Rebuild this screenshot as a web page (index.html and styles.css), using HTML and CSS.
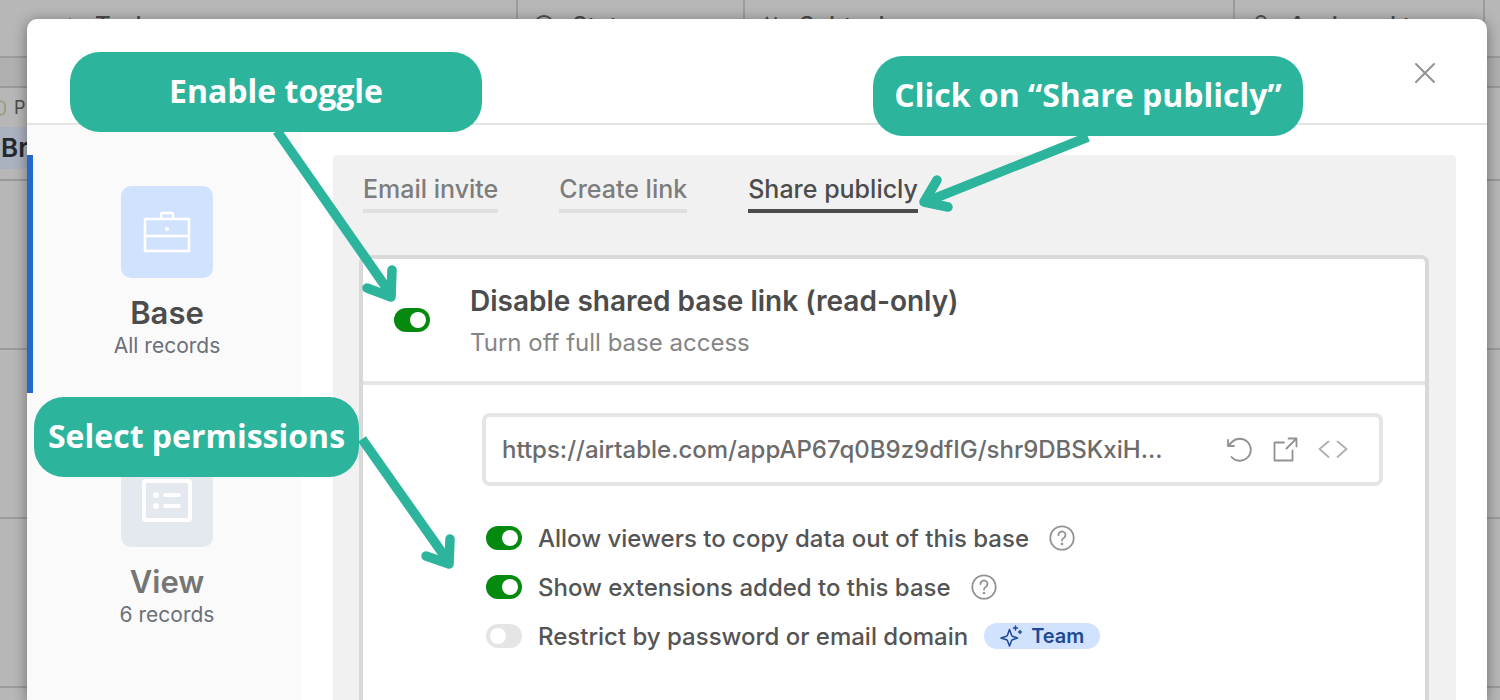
FILE: index.html
```html
<!DOCTYPE html>
<html lang="en">
  <head>
    <meta charset="UTF-8" />
    <meta name="viewport" content="width=device-width, initial-scale=1.0" />
    <title>Share base</title>
    <link rel="stylesheet" href="styles.css" />
  </head>
  <body>
    <!-- Dimmed grid behind the dialog -->
    <div class="grid" aria-hidden="true">
      <div class="grid-head">
        <div class="grid-cell grid-cell-first">
          <svg width="14" height="20" viewBox="0 0 14 20" fill="none" stroke="currentColor" stroke-width="2">
            <path d="M1 18L7 5l6 13M3 13h8" />
          </svg>
          Tasks
        </div>
        <div class="grid-cell">
          <svg width="20" height="20" viewBox="0 0 20 20" fill="none" stroke="currentColor" stroke-width="2">
            <circle cx="10" cy="10" r="9" />
            <path d="M6 9l4 4 4-4" />
          </svg>
          Status
        </div>
        <div class="grid-cell">
          <svg width="20" height="20" viewBox="0 0 20 20" fill="none" stroke="currentColor" stroke-width="2">
            <path d="M2 8l4-5 3 5M11 17l4-15" />
          </svg>
          Subtasks
        </div>
        <div class="grid-cell">
          <svg width="20" height="20" viewBox="0 0 20 20" fill="none" stroke="currentColor" stroke-width="2">
            <circle cx="10" cy="6" r="5" />
            <path d="M2 19c1-5 15-5 16 0" />
          </svg>
          Assigned to
        </div>
        <div class="grid-cell"></div>
      </div>
      <div class="grid-spacer"></div>
      <div class="grid-group">
        <div class="grid-group-label"><span class="grid-pill"></span>P</div>
        <div class="grid-group-name">Br</div>
      </div>
      <div class="grid-row"></div>
      <div class="grid-row"></div>
      <div class="grid-row"></div>
      <div class="grid-row"></div>
    </div>

    <div class="dialog" role="dialog" aria-label="Share">
      <header class="dialog-head">
        <button class="close" type="button" aria-label="Close">
          <svg width="22" height="22" viewBox="0 0 22 22" fill="none" stroke="#929292" stroke-width="2" stroke-linecap="round">
            <path d="M2 2l18 18M20 2L2 20" />
          </svg>
        </button>
      </header>

      <div class="dialog-body">
        <nav class="sidebar">
          <button class="scope scope-active" type="button">
            <span class="scope-tile">
              <svg width="48" height="44" viewBox="0 0 48 44" fill="none" stroke="#fff" stroke-width="2.5">
                <rect x="2" y="9" width="44" height="32" />
                <path d="M2 26h44M18 9V5q0-2 2-2h8q2 0 2 2v4" />
                <circle cx="24" cy="19" r="2" fill="#fff" stroke="none" />
              </svg>
            </span>
            <span class="scope-name">Base</span>
            <span class="scope-count">All records</span>
          </button>
          <button class="scope" type="button">
            <span class="scope-tile">
              <svg width="50" height="44" viewBox="0 0 50 44" fill="none" stroke="#fff" stroke-width="4" stroke-linecap="round">
                <rect x="2" y="2" width="46" height="39" rx="2" />
                <path d="M23 16h14M23 27h14" />
                <circle cx="14" cy="16" r="3" fill="#fff" stroke="none" />
                <circle cx="14" cy="27" r="3" fill="#fff" stroke="none" />
              </svg>
            </span>
            <span class="scope-name">View</span>
            <span class="scope-count">6 records</span>
          </button>
        </nav>

        <main class="panel">
          <div class="tabs">
            <a class="tab" href="#email">Email invite</a>
            <a class="tab" href="#link">Create link</a>
            <a class="tab tab-active" href="#public">Share publicly</a>
          </div>

          <section class="card">
            <div class="card-head">
              <input class="toggle" type="checkbox" id="shared" checked />
              <label class="card-label" for="shared">
                <span class="card-title">Disable shared base link (read-only)</span>
                <span class="card-sub">Turn off full base access</span>
              </label>
            </div>

            <div class="card-body">
              <div class="url-box">
                <input class="url" type="text" aria-label="Shared link" readonly value="https://airtable.com/appAP67q0B9z9dfIG/shr9DBSKxiH..." />
                <button class="icon-btn" type="button" aria-label="Regenerate link">
                  <svg width="26" height="26" viewBox="0 0 26 26" fill="none" stroke="#929292" stroke-width="1.8" stroke-linecap="round" stroke-linejoin="round">
                    <path d="M2 3v6h6M2 9l4-4a11 11 0 1 1-.5 15" />
                  </svg>
                </button>
                <button class="icon-btn" type="button" aria-label="Open link">
                  <svg width="26" height="26" viewBox="0 0 26 26" fill="none" stroke="#929292" stroke-width="1.8" stroke-linecap="round" stroke-linejoin="round">
                    <path d="M12 5.500H2.500v18h18V13.500M16.500 1.500H24.500v8M24 2L14.500 11.500" />
                  </svg>
                </button>
                <button class="icon-btn" type="button" aria-label="Embed">
                  <svg width="30" height="26" viewBox="0 0 30 26" fill="none" stroke="#b3adb0" stroke-width="1.8" stroke-linecap="round" stroke-linejoin="round">
                    <path d="M10.500 4.500L1.500 12l9 8M19.500 4.500l9 7.500-9 8" />
                  </svg>
                </button>
              </div>

              <div class="option">
                <input class="toggle" type="checkbox" id="copy" checked />
                <label for="copy">Allow viewers to copy data out of this base</label>
                <svg class="help" width="26" height="26" viewBox="0 0 26 26" fill="none" stroke="#929292" stroke-width="1.8" stroke-linecap="round">
                  <circle cx="13" cy="13" r="11.700" />
                  <path d="M9.500 10a3.500 3.500 0 1 1 5.500 2.800q-2 1-2 2.700" />
                  <circle cx="13" cy="19" r="1.300" fill="#929292" stroke="none" />
                </svg>
              </div>
              <div class="option">
                <input class="toggle" type="checkbox" id="extensions" checked />
                <label for="extensions">Show extensions added to this base</label>
                <svg class="help" width="26" height="26" viewBox="0 0 26 26" fill="none" stroke="#929292" stroke-width="1.8" stroke-linecap="round">
                  <circle cx="13" cy="13" r="11.700" />
                  <path d="M9.500 10a3.500 3.500 0 1 1 5.500 2.800q-2 1-2 2.700" />
                  <circle cx="13" cy="19" r="1.300" fill="#929292" stroke="none" />
                </svg>
              </div>
              <div class="option">
                <input class="toggle" type="checkbox" id="restrict" />
                <label for="restrict">Restrict by password or email domain</label>
                <span class="plan">
                  <svg width="22" height="22" viewBox="0 0 22 22" fill="none" stroke="#1e4a94" stroke-width="1.500" stroke-linecap="round" stroke-linejoin="round">
                    <path d="M9.500 4.500l2 5.500q.3.900 1 1.200l5 1.800-5 1.800q-.7.300-1 1L9.500 21l-2-5.200q-.3-.7-1-1L1 13l5.500-1.800q.7-.3 1-1.200z" />
                    <path d="M15.500 1v4M13.500 3h4M20 5.500v3M18.500 7h3" />
                  </svg>
                  Team
                </span>
              </div>
            </div>
          </section>
        </main>
      </div>
    </div>

    <!-- Tutorial callouts -->
    <svg class="arrows" width="1500" height="700" viewBox="0 0 1500 700" fill="none" stroke="#2cb59c" stroke-width="9.500" stroke-linejoin="round" aria-hidden="true">
      <path d="M277 131L390 293" />
      <path d="M392 270l-1 27-24-9" stroke-linecap="round" />
      <path d="M1088 137L928 201" />
      <path d="M937 180l-13 22 24 5" stroke-linecap="round" />
      <path d="M362 439L448 561" />
      <path d="M450 539l-1 25-23-8" stroke-linecap="round" />
    </svg>
    <div class="callout callout-toggle">Enable toggle</div>
    <div class="callout callout-share">Click on “Share publicly”</div>
    <div class="callout callout-permissions">Select permissions</div>
  </body>
</html>
```

FILE: styles.css
```css
* {
  box-sizing: border-box;
  margin: 0;
  padding: 0;
}

body {
  position: relative;
  height: 100vh;
  overflow: hidden;
  font-family: "Inter", "Liberation Sans", sans-serif;
  color: #4c4c4c;
  background: #b7b7b7;
}

button {
  font: inherit;
  color: inherit;
  border: none;
  background: none;
  cursor: pointer;
}

/* Background grid */
.grid {
  display: flex;
  flex-direction: column;
  height: 100%;
}

.grid-head {
  display: grid;
  flex: none;
  grid-template-columns: 518fr 227fr 490fr 250fr 15fr;
  height: 58px;
  border-bottom: 2px solid #9c9c9c;
}

.grid-cell {
  display: flex;
  align-items: center;
  gap: 18px;
  height: 56px;
  padding: 0 0 6px 16px;
  border-right: 2px solid #9c9c9c;
  font-size: 24px;
  font-weight: 500;
  white-space: nowrap;
}

.grid-cell:last-child {
  padding: 0;
  border-right: none;
}

.grid-cell-first {
  padding-left: 63px;
}

.grid-spacer {
  flex: none;
  height: 30px;
  background: #b0b0b0;
  border-bottom: 2px solid #999;
}

.grid-group {
  flex: none;
  height: 93px;
  border-bottom: 2px solid #999;
}

.grid-group-label {
  display: flex;
  align-items: center;
  gap: 8px;
  height: 39px;
  font-size: 18px;
}

.grid-pill {
  width: 6px;
  height: 16px;
  border: 2px solid #a19c88;
  border-left: none;
  border-radius: 0 8px 8px 0;
  background: #b7b7b7;
}

.grid-group-name {
  width: 50%;
  height: 42px;
  padding-left: 1px;
  background: #abb2bf;
  color: #25282d;
  font-size: 26px;
  font-weight: 600;
  line-height: 42px;
}

.grid-row {
  flex: none;
  height: 169px;
  border-bottom: 2px solid #9c9c9c;
}

.grid-row:last-child {
  flex: 1;
  border-bottom: none;
}

/* Dialog */
.dialog {
  position: absolute;
  top: 19px;
  right: 13px;
  bottom: 0;
  left: 27px;
  display: flex;
  flex-direction: column;
  background: #fff;
  border-radius: 10px 10px 0 0;
  box-shadow: 0 2px 14px rgba(0, 0, 0, 0.4);
  overflow: hidden;
}

.dialog-head {
  display: flex;
  flex: none;
  justify-content: flex-end;
  align-items: center;
  height: 106px;
  padding: 3px 51px 0 0;
  border-bottom: 2px solid #e5e5e5;
}

.close,
.icon-btn {
  display: flex;
}

.dialog-body {
  display: flex;
  flex: 1;
}

.sidebar {
  display: flex;
  flex: none;
  flex-direction: column;
  gap: 31px;
  width: 274px;
  padding-top: 30px;
  background: #fafafa;
}

.scope {
  display: flex;
  flex-direction: column;
  align-items: center;
  padding: 31px 0 33px;
  border-left: 6px solid transparent;
  color: #757575;
}

.scope-active {
  border-left-color: #2468ca;
  color: #4c4c4c;
}

.scope-tile {
  display: flex;
  align-items: center;
  justify-content: center;
  width: 92px;
  height: 92px;
  margin-bottom: 16px;
  border-radius: 10px;
  background: #e4e8ef;
}

.scope-active .scope-tile {
  background: #d1e2ff;
}

.scope-name {
  font-size: 31px;
  font-weight: 600;
  line-height: 38px;
}

.scope-count {
  color: #6b7078;
  font-size: 21px;
  line-height: 28px;
}

.panel {
  display: flex;
  flex: 1;
  flex-direction: column;
  margin: 30px 31px 0 32px;
  padding: 17px 27px 0 26px;
  border-radius: 4px 4px 0 0;
  background: #f1f1f1;
}

.tabs {
  display: flex;
  gap: 61px;
  padding-left: 4px;
}

.tab {
  padding-bottom: 3px;
  border-bottom: 4px solid #dfdfdf;
  color: #7d7d7d;
  font-size: 25px;
  font-weight: 500;
  line-height: 34px;
  text-decoration: none;
}

.tab-active {
  border-color: #4c4c4c;
  color: #4c4c4c;
}

.card {
  flex: 1;
  margin-top: 42px;
  border: 4px solid #d9d9d9;
  border-bottom: none;
  border-radius: 8px 8px 0 0;
  background: #fff;
}

.card-head {
  display: flex;
  align-items: center;
  gap: 40px;
  height: 126px;
  padding-left: 31px;
  border-bottom: 4px solid #e5e5e5;
}

.card-label {
  display: flex;
  flex-direction: column;
  gap: 4px;
  padding-top: 4px;
}

.card-title {
  font-size: 28px;
  font-weight: 600;
  line-height: 38px;
}

.card-sub {
  color: #858585;
  font-size: 24px;
  line-height: 38px;
}

/* On/off switch */
.toggle {
  display: flex;
  flex: none;
  align-items: center;
  width: 36px;
  height: 24px;
  padding: 0 4px;
  border-radius: 12px;
  background: #e5e5e5;
  appearance: none;
  cursor: pointer;
}

.toggle::before {
  content: "";
  width: 16px;
  height: 16px;
  border-radius: 50%;
  background: #fff;
}

.toggle:checked {
  justify-content: flex-end;
  background: #048a0e;
}

.card-body {
  padding: 28px 42px 0 119px;
}

.url-box {
  display: flex;
  align-items: center;
  gap: 20px;
  height: 73px;
  margin-bottom: 27px;
  padding: 0 31px 0 16px;
  border: 4px solid #e5e5e5;
  border-radius: 8px;
}

.url {
  flex: 1;
  min-width: 0;
  border: none;
  outline: none;
  background: none;
  color: #6b6b6b;
  font-family: inherit;
  font-size: 24px;
  font-weight: 500;
}

.option {
  display: flex;
  align-items: center;
  gap: 16px;
  height: 49px;
  padding-left: 4px;
  color: #545454;
  font-size: 24px;
  font-weight: 500;
}

.option label {
  padding-top: 2px;
}

.help {
  margin-left: 4px;
}

.plan {
  display: flex;
  align-items: center;
  gap: 9px;
  height: 26px;
  padding: 0 16px;
  border-radius: 13px;
  background: #d1e2ff;
  color: #1e4a94;
  font-size: 20px;
  font-weight: 600;
}

/* Callouts */
.arrows {
  position: absolute;
  top: 0;
  left: 0;
}

.callout {
  position: absolute;
  display: flex;
  align-items: center;
  justify-content: center;
  height: 80px;
  padding-bottom: 4px;
  border-radius: 30px;
  background: #2cb59c;
  color: #fff;
  font-family: "Open Sans", "Noto Sans", sans-serif;
  font-size: 32px;
  font-weight: 700;
  white-space: nowrap;
}

.callout-toggle {
  top: 52px;
  left: 70px;
  width: 412px;
}

.callout-share {
  top: 56px;
  left: 873px;
  width: 430px;
}

.callout-permissions {
  top: 397px;
  left: 34px;
  width: 325px;
}
```
